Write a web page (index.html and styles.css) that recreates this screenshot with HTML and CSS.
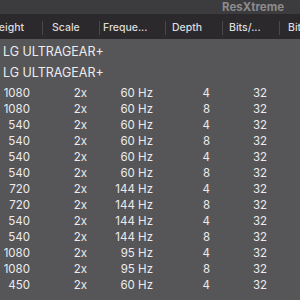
FILE: index.html
```html
<!DOCTYPE html>
<html lang="en">
<head>
    <meta charset="UTF-8">
    <meta name="viewport" content="width=device-width, initial-scale=1.0">
    <title>ResXtreme</title>
    <link rel="stylesheet" href="styles.css">
</head>
<body>
    <div class="window">
        <div class="titlebar">
            <span class="title">ResXtreme</span>
        </div>
        <div class="viewport">
            <table class="modes">
                <colgroup>
                    <col class="c-height">
                    <col class="c-scale">
                    <col class="c-freq">
                    <col class="c-depth">
                    <col class="c-bits">
                    <col class="c-more">
                </colgroup>
                <thead>
                    <tr>
                        <th><div class="hcell h-height">Height</div></th>
                        <th><div class="hcell h-scale">Scale</div></th>
                        <th><div class="hcell h-freq">Freque...</div></th>
                        <th><div class="hcell h-depth">Depth</div></th>
                        <th><div class="hcell h-bits">Bits/...</div></th>
                        <th><div class="hcell h-more">Bit</div></th>
                    </tr>
                </thead>
                <tbody>
                    <tr class="group first"><td colspan="6">LG ULTRAGEAR+</td></tr>
                    <tr class="group last"><td colspan="6">LG ULTRAGEAR+</td></tr>
                    <tr><td>1080</td><td>2x</td><td>60 Hz</td><td>4</td><td>32</td><td></td></tr>
                    <tr><td>1080</td><td>2x</td><td>60 Hz</td><td>8</td><td>32</td><td></td></tr>
                    <tr><td>540</td><td>2x</td><td>60 Hz</td><td>4</td><td>32</td><td></td></tr>
                    <tr><td>540</td><td>2x</td><td>60 Hz</td><td>8</td><td>32</td><td></td></tr>
                    <tr><td>540</td><td>2x</td><td>60 Hz</td><td>4</td><td>32</td><td></td></tr>
                    <tr><td>540</td><td>2x</td><td>60 Hz</td><td>8</td><td>32</td><td></td></tr>
                    <tr><td>720</td><td>2x</td><td>144 Hz</td><td>4</td><td>32</td><td></td></tr>
                    <tr><td>720</td><td>2x</td><td>144 Hz</td><td>8</td><td>32</td><td></td></tr>
                    <tr><td>540</td><td>2x</td><td>144 Hz</td><td>4</td><td>32</td><td></td></tr>
                    <tr><td>540</td><td>2x</td><td>144 Hz</td><td>8</td><td>32</td><td></td></tr>
                    <tr><td>1080</td><td>2x</td><td>95 Hz</td><td>4</td><td>32</td><td></td></tr>
                    <tr><td>1080</td><td>2x</td><td>95 Hz</td><td>8</td><td>32</td><td></td></tr>
                    <tr><td>450</td><td>2x</td><td>60 Hz</td><td>4</td><td>32</td><td></td></tr>
                </tbody>
            </table>
        </div>
    </div>
</body>
</html>
```

FILE: styles.css
```css
body {
    margin: 0;
    font-family: 'Inter', 'Liberation Sans', sans-serif;
    background: #565558;
    width: 300px;
    height: 300px;
    overflow: hidden;
}

.window {
    display: flex;
    flex-direction: column;
    height: 300px;
}

.titlebar {
    height: 14px;
    background: #3c3b3d;
    display: flex;
    justify-content: flex-end;
    align-items: center;
    padding-right: 16px;
}

.title {
    font-size: 11.5px;
    font-weight: 700;
    color: #8c8b8d;
    line-height: 14px;
}

.viewport {
    flex: 1;
    overflow: hidden;
}

.modes {
    border-collapse: collapse;
    table-layout: fixed;
    width: 360px;
    margin-left: -14px; /* table is scrolled a bit to the right */
}

.c-height { width: 56px; }
.c-scale { width: 57px; }
.c-freq { width: 66px; }
.c-depth { width: 57px; }
.c-bits { width: 57px; }
.c-more { width: 67px; }

thead th {
    background: #2b292c;
    padding: 7px 0 4px;
    font-weight: 500;
    font-size: 10.5px;
    color: #dcdbdd;
    text-align: left;
}

.hcell {
    height: 14px;
    line-height: 14px;
    white-space: nowrap;
    border-left: 1px solid #4a484b;
}

.h-height { border-left: none; padding-left: 5px; }
.h-scale { padding-left: 9px; }
.h-freq { padding-left: 3px; }
.h-depth { padding-left: 6px; }
.h-bits { padding-left: 6px; }
.h-more { padding-left: 8px; }

tbody td {
    height: 16px;
    line-height: 16px;
    padding: 0 12px 0 0;
    font-size: 11.5px;
    color: #ececed;
    text-align: right;
    white-space: nowrap;
}

tbody .group td {
    height: 21px;
    line-height: 21px;
    padding: 0 0 0 17px;
    font-size: 12.5px;
    text-align: left;
}

tbody .group.first td {
    padding-top: 2px;
}

tbody .group.last td {
    padding-bottom: 2px;
}
```
